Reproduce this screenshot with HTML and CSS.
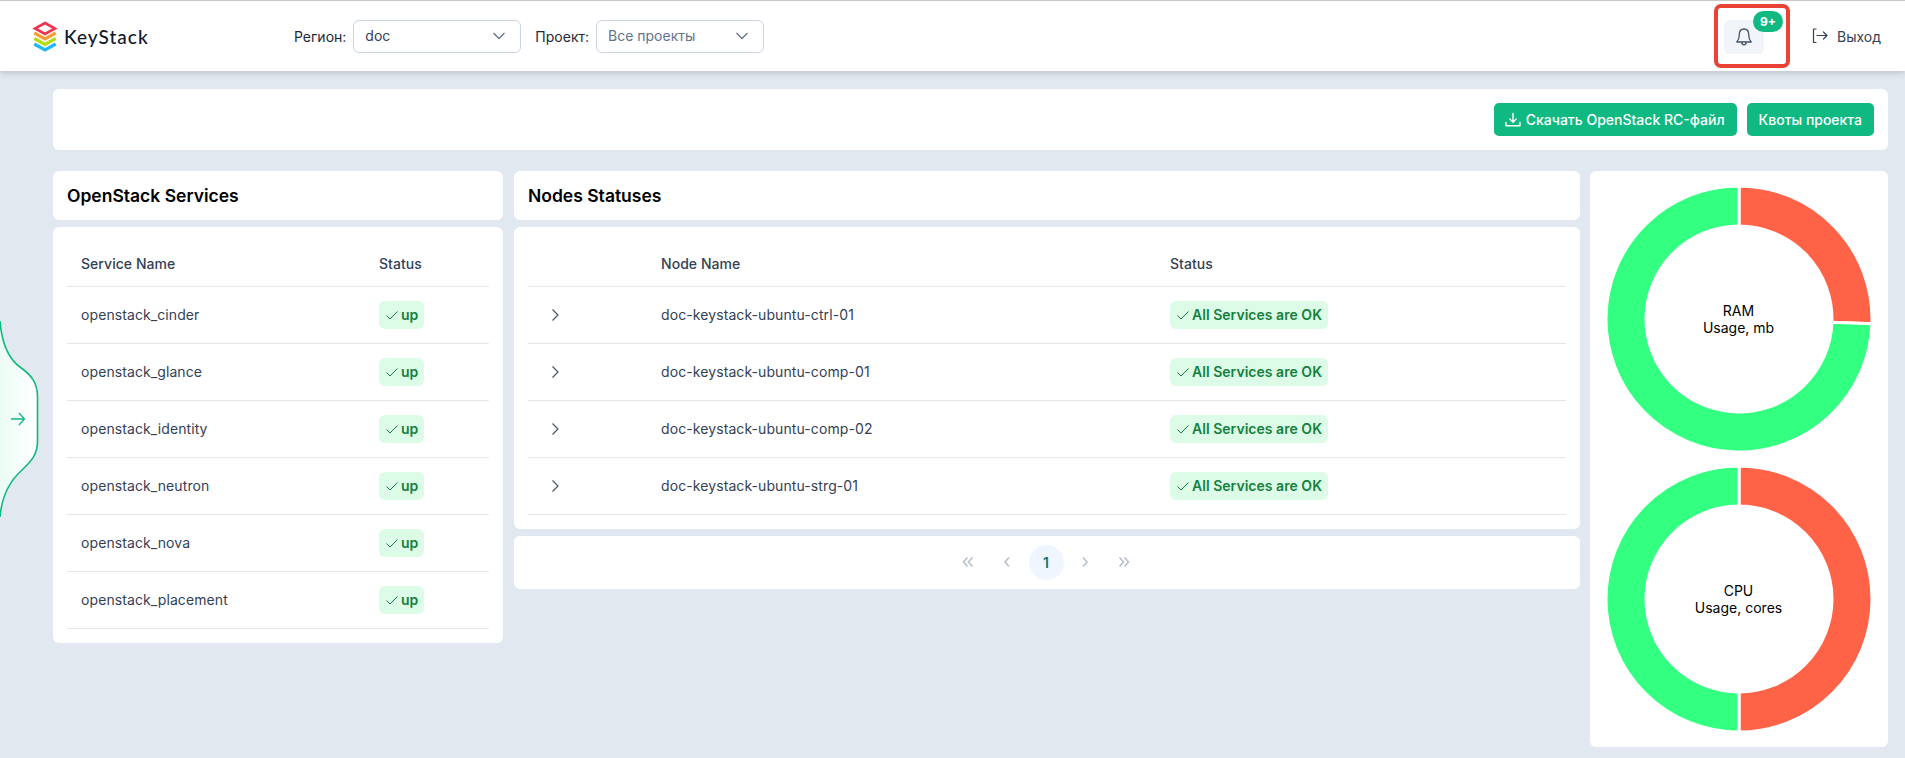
FILE: index.html
```html
<!DOCTYPE html>
<html lang="ru">
<head>
<meta charset="utf-8">
<title>KeyStack</title>
<link rel="stylesheet" href="styles.css">
</head>
<body>
<header class="topbar">
  <a class="logo">
    <svg class="logo-mark" width="26" height="31" viewBox="0 0 26 31" fill="none">
      <path d="M2.3 23 L13 29 L23.7 23" stroke="#1fb8f5" stroke-width="3.2"/>
      <path d="M2.3 17.5 L13 23.5 L23.7 17.5" stroke="#fff" stroke-width="5"/>
      <path d="M2.3 17.5 L13 23.5 L23.7 17.5" stroke="#b5dc10" stroke-width="3.2"/>
      <path d="M2.3 12 L13 18 L23.7 12" stroke="#fff" stroke-width="5"/>
      <path d="M2.3 12 L13 18 L23.7 12" stroke="#f5a033" stroke-width="3.2"/>
      <path d="M13 2 L23 7.5 L13 13 L3 7.5 Z" stroke="#f0344f" stroke-width="2.6" fill="#fff"/>
    </svg>
    <span class="logo-text">KeyStack</span>
  </a>
  <div class="filters">
    <label class="filter-label">Регион:</label>
    <div class="select"><span class="select-value">doc</span>
      <svg class="chev" width="14" height="14" viewBox="0 0 14 14" fill="none" stroke="#64748b" stroke-width="1.3"><path d="M1.5 4 L7 9.5 L12.5 4"/></svg>
    </div>
    <label class="filter-label label-project">Проект:</label>
    <div class="select"><span class="select-value muted">Все проекты</span>
      <svg class="chev" width="14" height="14" viewBox="0 0 14 14" fill="none" stroke="#64748b" stroke-width="1.3"><path d="M1.5 4 L7 9.5 L12.5 4"/></svg>
    </div>
  </div>
  <div class="top-actions">
    <div class="notify-frame">
      <button class="notify-btn">
        <svg width="20" height="20" viewBox="0 0 20 20" fill="none" stroke="#475569" stroke-width="1.3" stroke-linecap="round" stroke-linejoin="round"><path d="M10 2 C6.8 2 5.3 4.6 5.3 7.5 C5.3 11 4.6 13 2.8 15 H17.2 C15.4 13 14.7 11 14.7 7.5 C14.7 4.6 13.2 2 10 2 Z"/><path d="M7.8 15.2 C7.8 17 8.8 17.8 10 17.8 C11.2 17.8 12.2 17 12.2 15.2"/></svg>
      </button>
      <span class="notify-badge">9+</span>
    </div>
    <a class="logout">
      <svg width="16" height="18" viewBox="0 0 16 18" fill="none" stroke="#334155" stroke-width="1.2" stroke-linecap="round" stroke-linejoin="round"><path d="M4 2 H1.5 V15.5 H4"/><path d="M5 8.5 H15 M11.5 5 L15 8.5 L11.5 12"/></svg>
      <span>Выход</span>
    </a>
  </div>
</header>

<a class="side-toggle" aria-label="Открыть меню">
  <svg width="40" height="200" viewBox="0 0 40 200">
    <defs><linearGradient id="tg" x1="0" x2="1" y1="0" y2="0"><stop offset="0" stop-color="#ecfdf5"/><stop offset="1" stop-color="#ffffff"/></linearGradient></defs>
    <path d="M0 0 C2 25 9 38 20 46 C31 54 37.5 61 37.5 76 L37.5 120 C37.5 135 30 141 21 150 C10 160 2 173 0 196 Z" fill="url(#tg)"/>
    <path d="M0 0 C2 25 9 38 20 46 C31 54 37.5 61 37.5 76 L37.5 120 C37.5 135 30 141 21 150 C10 160 2 173 0 196" fill="none" stroke="#10b981" stroke-width="1.6"/>
    <path d="M11 98 H24.5 M19 92 L24.5 98 L19 104" fill="none" stroke="#10b981" stroke-width="1.3"/>
  </svg>
</a>

<main class="page">
  <section class="action-bar">
    <button class="btn btn-icon">
      <svg width="16" height="16" viewBox="0 0 16 16" fill="none" stroke="#fff" stroke-width="1.4" stroke-linecap="round" stroke-linejoin="round"><path d="M8 1.5 V10 M4.8 7 L8 10.2 L11.2 7"/><path d="M1 10.5 V13.8 H15 V10.5"/></svg>
      Скачать OpenStack RC-файл
    </button>
    <button class="btn">Квоты проекта</button>
  </section>

  <div class="columns">
    <div class="col">
      <div class="card title-card"><h2>OpenStack Services</h2></div>
      <div class="card table-card">
        <table class="table table-services">
          <thead><tr><th class="c-svc">Service Name</th><th>Status</th></tr></thead>
          <tbody>
            <tr><td>openstack_cinder</td><td><span class="badge"><svg class="check" width="14" height="14" viewBox="0 0 14 14" fill="none" stroke="#15803d" stroke-width="1"><path d="M1.5 7.5 L5 11 L12.5 3.5"/></svg>up</span></td></tr>
            <tr><td>openstack_glance</td><td><span class="badge"><svg class="check" width="14" height="14" viewBox="0 0 14 14" fill="none" stroke="#15803d" stroke-width="1"><path d="M1.5 7.5 L5 11 L12.5 3.5"/></svg>up</span></td></tr>
            <tr><td>openstack_identity</td><td><span class="badge"><svg class="check" width="14" height="14" viewBox="0 0 14 14" fill="none" stroke="#15803d" stroke-width="1"><path d="M1.5 7.5 L5 11 L12.5 3.5"/></svg>up</span></td></tr>
            <tr><td>openstack_neutron</td><td><span class="badge"><svg class="check" width="14" height="14" viewBox="0 0 14 14" fill="none" stroke="#15803d" stroke-width="1"><path d="M1.5 7.5 L5 11 L12.5 3.5"/></svg>up</span></td></tr>
            <tr><td>openstack_nova</td><td><span class="badge"><svg class="check" width="14" height="14" viewBox="0 0 14 14" fill="none" stroke="#15803d" stroke-width="1"><path d="M1.5 7.5 L5 11 L12.5 3.5"/></svg>up</span></td></tr>
            <tr><td>openstack_placement</td><td><span class="badge"><svg class="check" width="14" height="14" viewBox="0 0 14 14" fill="none" stroke="#15803d" stroke-width="1"><path d="M1.5 7.5 L5 11 L12.5 3.5"/></svg>up</span></td></tr>
          </tbody>
        </table>
      </div>
    </div>

    <div class="col col-nodes">
      <div class="card title-card"><h2>Nodes Statuses</h2></div>
      <div class="card table-card">
        <table class="table table-nodes">
          <thead><tr><th class="c-exp"></th><th class="c-node">Node Name</th><th>Status</th></tr></thead>
          <tbody>
            <tr><td class="exp"><svg width="12" height="14" viewBox="0 0 12 14" fill="none" stroke="#475569" stroke-width="1.2"><path d="M3.5 1.5 L9 7 L3.5 12.5"/></svg></td><td>doc-keystack-ubuntu-ctrl-01</td><td><span class="badge"><svg class="check" width="14" height="14" viewBox="0 0 14 14" fill="none" stroke="#15803d" stroke-width="1"><path d="M1.5 7.5 L5 11 L12.5 3.5"/></svg>All Services are OK</span></td></tr>
            <tr><td class="exp"><svg width="12" height="14" viewBox="0 0 12 14" fill="none" stroke="#475569" stroke-width="1.2"><path d="M3.5 1.5 L9 7 L3.5 12.5"/></svg></td><td>doc-keystack-ubuntu-comp-01</td><td><span class="badge"><svg class="check" width="14" height="14" viewBox="0 0 14 14" fill="none" stroke="#15803d" stroke-width="1"><path d="M1.5 7.5 L5 11 L12.5 3.5"/></svg>All Services are OK</span></td></tr>
            <tr><td class="exp"><svg width="12" height="14" viewBox="0 0 12 14" fill="none" stroke="#475569" stroke-width="1.2"><path d="M3.5 1.5 L9 7 L3.5 12.5"/></svg></td><td>doc-keystack-ubuntu-comp-02</td><td><span class="badge"><svg class="check" width="14" height="14" viewBox="0 0 14 14" fill="none" stroke="#15803d" stroke-width="1"><path d="M1.5 7.5 L5 11 L12.5 3.5"/></svg>All Services are OK</span></td></tr>
            <tr><td class="exp"><svg width="12" height="14" viewBox="0 0 12 14" fill="none" stroke="#475569" stroke-width="1.2"><path d="M3.5 1.5 L9 7 L3.5 12.5"/></svg></td><td>doc-keystack-ubuntu-strg-01</td><td><span class="badge"><svg class="check" width="14" height="14" viewBox="0 0 14 14" fill="none" stroke="#15803d" stroke-width="1"><path d="M1.5 7.5 L5 11 L12.5 3.5"/></svg>All Services are OK</span></td></tr>
          </tbody>
        </table>
      </div>
      <div class="card pager">
        <span class="pg"><svg width="12" height="12" viewBox="0 0 12 12" fill="none" stroke="#b6bfcc" stroke-width="1.6"><path d="M5.5 1.5 L1.5 6 L5.5 10.5 M10.5 1.5 L6.5 6 L10.5 10.5"/></svg></span>
        <span class="pg"><svg width="12" height="12" viewBox="0 0 12 12" fill="none" stroke="#b6bfcc" stroke-width="1.6"><path d="M8 1.5 L4 6 L8 10.5"/></svg></span>
        <span class="pg pg-current">1</span>
        <span class="pg"><svg width="12" height="12" viewBox="0 0 12 12" fill="none" stroke="#b6bfcc" stroke-width="1.6"><path d="M4 1.5 L8 6 L4 10.5"/></svg></span>
        <span class="pg"><svg width="12" height="12" viewBox="0 0 12 12" fill="none" stroke="#b6bfcc" stroke-width="1.6"><path d="M1.5 1.5 L5.5 6 L1.5 10.5 M6.5 1.5 L10.5 6 L6.5 10.5"/></svg></span>
      </div>
    </div>

    <aside class="card charts">
      <div class="donut">
        <svg width="268" height="268" viewBox="-134 -134 268 268">
          <path d="M0 -133 A133 133 0 0 1 132.92 4.64 L92.94 3.25 A93 93 0 0 0 0 -93 Z" fill="#ff6347" stroke="#fff" stroke-width="3"/>
          <path d="M132.92 4.64 A133 133 0 1 1 0 -133 L0 -93 A93 93 0 1 0 92.94 3.25 Z" fill="#33ff80" stroke="#fff" stroke-width="3"/>
        </svg>
        <div class="donut-label">RAM<br>Usage, mb</div>
      </div>
      <div class="donut">
        <svg width="268" height="268" viewBox="-134 -134 268 268">
          <path d="M0 -133 A133 133 0 0 1 0 133 L0 93 A93 93 0 0 0 0 -93 Z" fill="#ff6347" stroke="#fff" stroke-width="3"/>
          <path d="M0 133 A133 133 0 0 1 0 -133 L0 -93 A93 93 0 0 0 0 93 Z" fill="#33ff80" stroke="#fff" stroke-width="3"/>
        </svg>
        <div class="donut-label">CPU<br>Usage, cores</div>
      </div>
    </aside>
  </div>
</main>
</body>
</html>
```
FILE: styles.css
```css
* { box-sizing: border-box; }
html, body { margin: 0; padding: 0; }
body {
  position: relative;
  min-height: 758px;
  background: #e2e8f0;
  font-family: Inter, "Liberation Sans", sans-serif;
  font-size: 14px;
  color: #334155;
}
.topbar {
  display: flex;
  align-items: center;
  height: 71px;
  padding: 0 24px 0 32px;
  background: #fff;
  border-top: 1px solid #c9c9c9;
  box-shadow: 0 2px 6px rgba(15, 23, 42, 0.18);
}
.logo { display: flex; align-items: center; width: 262px; gap: 6px; }
.logo-mark { display: block; }
.logo-text {
  font-family: Lato, Inter, sans-serif;
  font-size: 19px;
  font-weight: 500;
  letter-spacing: 1px;
  color: #111827;
}
.filters { display: flex; align-items: center; }
.filter-label { color: #1f2937; margin-right: 7px; }
.label-project { margin-left: 14px; }
.select {
  display: flex;
  align-items: center;
  justify-content: space-between;
  width: 168px;
  height: 33px;
  padding: 0 14px 1px 11px;
  border: 1px solid #cbd5e1;
  border-radius: 6px;
  background: #fff;
}
.select-value { color: #374151; }
.muted { color: #64748b; }
.top-actions { margin-left: auto; display: flex; align-items: center; }
.notify-frame {
  position: relative;
  display: flex;
  align-items: center;
  justify-content: center;
  width: 76px;
  height: 64px;
  margin-top: -1px;
  border: 4px solid #ea4335;
  border-radius: 7px;
  padding-right: 16px;
  padding-top: 2px;
}
.notify-btn {
  display: flex;
  align-items: center;
  justify-content: center;
  width: 40px;
  height: 34px;
  padding: 0;
  border: 0;
  border-radius: 6px;
  background: #f1f5f9;
}
.notify-badge {
  position: absolute;
  top: 3px;
  right: 3px;
  width: 30px;
  height: 21px;
  border-radius: 11px;
  background: #10b981;
  color: #fff;
  font-size: 12px;
  font-weight: 700;
  line-height: 21px;
  text-align: center;
}
.logout { display: flex; align-items: center; gap: 9px; margin-left: 22px; color: #334155; }

.side-toggle { position: absolute; left: 0; top: 321px; display: block; line-height: 0; }

.page { padding: 18px 17px 11px 53px; }
.card { background: #fff; border-radius: 6px; }
.action-bar {
  display: flex;
  justify-content: flex-end;
  gap: 10px;
  height: 61px;
  padding: 14px 14px 0;
  background: #fff;
  border-radius: 6px;
}
.btn {
  display: flex;
  align-items: center;
  gap: 5px;
  height: 33px;
  padding: 0 12px;
  border: 0;
  border-radius: 5px;
  background: #10b981;
  color: #fff;
  font-family: inherit;
  font-size: 14px;
  font-weight: 500;
}
.btn-icon { padding-left: 11px; }
.columns {
  display: grid;
  grid-template-columns: 450px 1067px 298px;
  column-gap: 10px;
  margin-top: 21px;
  align-items: start;
}
.col { display: flex; flex-direction: column; gap: 7px; }
.col-nodes { margin-left: 1px; }
.title-card { height: 49px; display: flex; align-items: center; padding: 0 14px; }
.title-card h2 { margin: 0; font-size: 17.5px; font-weight: 600; color: #000; }
.table-card { padding: 14px; }
.table { width: 100%; border-collapse: collapse; table-layout: fixed; }
.table th {
  height: 45px;
  padding: 0 14px;
  text-align: left;
  font-weight: 500;
  letter-spacing: 0.05px;
  color: #334155;
  border-bottom: 1px solid #e5e7eb;
}
.table td {
  height: 57px;
  padding: 0 14px;
  letter-spacing: 0.09px;
  border-bottom: 1px solid #e5e7eb;
  color: #334155;
}
.c-svc { width: 298px; }
.c-exp { width: 119px; }
.c-node { width: 509px; }
.exp { line-height: 0; }
.exp svg { margin-left: 7px; }
.badge {
  display: inline-flex;
  align-items: center;
  gap: 2px;
  height: 28px;
  padding: 0 6px;
  border-radius: 6px;
  background: #dcfce7;
  color: #15803d;
  font-weight: 600;
  letter-spacing: 0.03px;
  vertical-align: middle;
}
.pager {
  display: flex;
  align-items: center;
  justify-content: center;
  gap: 4px;
  height: 53px;
  padding-right: 2px;
}
.pg { display: flex; align-items: center; justify-content: center; width: 35px; height: 35px; }
.pg-current {
  border-radius: 50%;
  background: #eff6ff;
  color: #0f766e;
  font-weight: 600;
}
.charts {
  display: flex;
  flex-direction: column;
  align-items: center;
  gap: 12px;
  height: 576px;
  padding: 14px 1px 0 0;
}
.donut { position: relative; width: 268px; height: 268px; line-height: 0; }
.donut svg { display: block; }
.donut-label {
  position: absolute;
  inset: 0;
  display: flex;
  align-items: center;
  justify-content: center;
  text-align: center;
  font-size: 14px;
  line-height: 17px;
  color: #000;
}
```
